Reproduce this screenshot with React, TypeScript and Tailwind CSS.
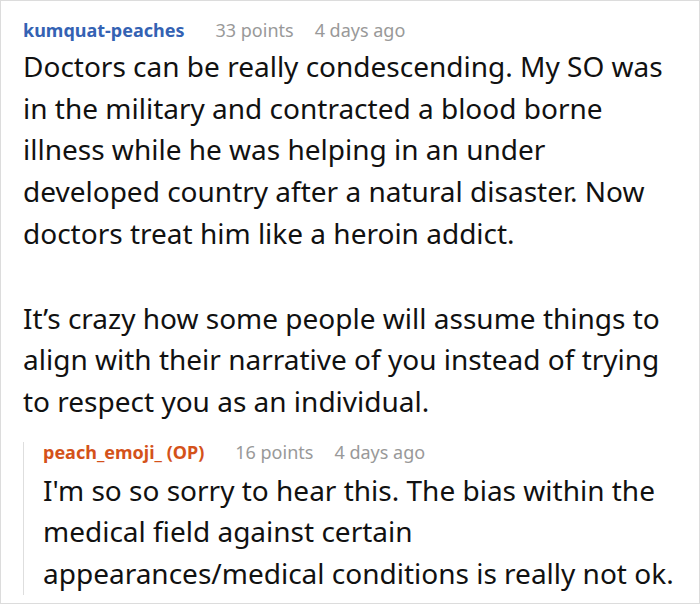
export default function App() {
  return (
    <div
      className="w-[700px] h-[604px] overflow-hidden border border-[#dcdcdc] bg-white text-[#111]"
      style={{ fontFamily: '"Noto Sans", sans-serif' }}
    >
      <div className="pl-[22px] pr-[21px] pt-[16px]">
        {/* Comment header */}
        <div className="flex items-baseline text-[18px] leading-[26px]">
          <span className="font-bold text-[#3462b3]">kumquat-peaches</span>
          <span className="ml-[31px] text-[#999]">33 points</span>
          <span className="ml-[21px] text-[#999]">4 days ago</span>
        </div>

        {/* Comment body */}
        <div className="mt-[3px] text-[28px] leading-[41.7px]">
          <p>
            Doctors can be really condescending. My SO was in the military and contracted a blood borne
            illness while he was helping in an under developed country after a natural disaster. Now
            doctors treat him like a heroin addict.
          </p>
          <p className="mt-[43px]">
            It’s crazy how some people will assume things to align with their narrative of you instead of
            trying to respect you as an individual.
          </p>
        </div>

        {/* Reply */}
        <div className="mt-[19px] border-l border-[#dedede] pl-[19px]">
          <div className="flex items-baseline text-[18px] leading-[20px]">
            <span className="font-bold text-[#d4521a]">peach_emoji_ (OP)</span>
            <span className="ml-[31px] text-[#999]">16 points</span>
            <span className="ml-[21px] text-[#999]">4 days ago</span>
          </div>
          <p className="mt-[8px] -mb-[10px] text-[28px] leading-[41.7px]">
            I'm so so sorry to hear this. The bias within the medical field against certain
            appearances/medical conditions is really not ok.
          </p>
        </div>
      </div>
    </div>
  );
}
